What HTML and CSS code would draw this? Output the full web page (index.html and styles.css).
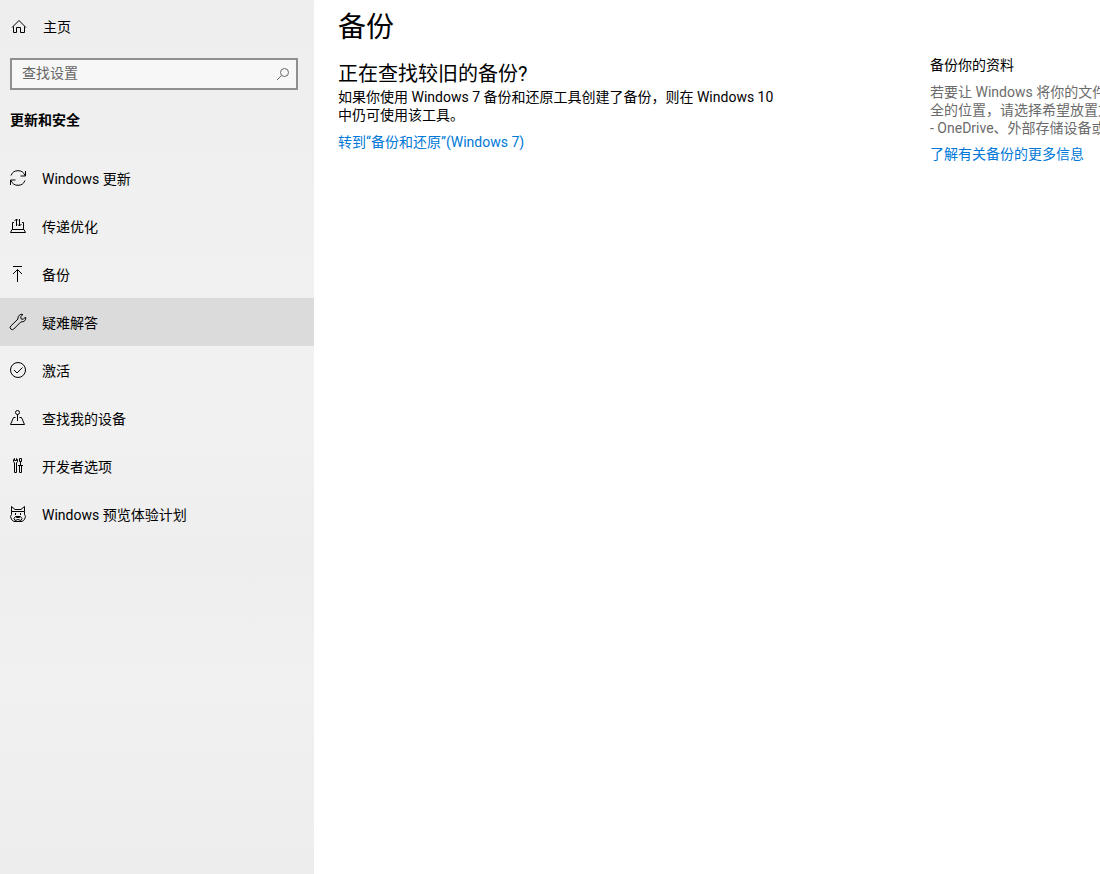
FILE: index.html
```html
<!DOCTYPE html>
<html lang="zh-CN">
<head>
<meta charset="utf-8">
<title>备份</title>
<link rel="stylesheet" href="styles.css">
</head>
<body>
<div class="settings">
  <div class="sidebar">
    <a class="home" href="#">
      <svg class="icon" viewBox="0 0 18 18"><path d="M2 9.500 9 2.500 16 9.500M3.500 8.500v6h3v-5h4v5h4v-6"/></svg>
      <span>主页</span>
    </a>
    <form class="search">
      <input class="search-input" type="text" placeholder="查找设置" aria-label="查找设置">
      <button class="search-button" type="button" aria-label="搜索">
        <svg class="search-icon" viewBox="0 0 14 14"><circle cx="8.500" cy="5.500" r="4"/><path d="M5.500 8.500 1 13"/></svg>
      </button>
    </form>
    <h2 class="category">更新和安全</h2>
    <nav class="nav">
      <a class="nav-item" href="#">
        <svg class="icon" viewBox="0 0 18 18"><path d="M2 6.500A7.500 7.500 0 0 1 16 6.500M16.500 2v5h-5M16 11.500A7.500 7.500 0 0 1 2 11.500M1.500 16v-5h5"/></svg>
        <span>Windows 更新</span>
      </a>
      <a class="nav-item" href="#">
        <svg class="icon" viewBox="0 0 18 18"><path d="M5 5.500H3.500v7M13 5.500h1.500v7M3 12.500h12l1.500 3h-15zM7.500 9V2M5.500 4l2-2 1.500 1.500M10.500 2v7M9 7.500l1.500 1.500 2-2"/></svg>
        <span>传递优化</span>
      </a>
      <a class="nav-item" href="#">
        <svg class="icon" viewBox="0 0 18 18"><path d="M4 1.500h9M8.500 17V4.500M4 9l4.500-4.500L13 9"/></svg>
        <span>备份</span>
      </a>
      <a class="nav-item nav-item-hover" href="#">
        <svg class="icon" viewBox="0 0 18 18"><path d="M9 6C8.500 3 11 .8 14 1.400L11.700 3.700l.4 2.200 2.200.4L16.600 4c.7 3.200-1.600 5.200-4.600 4.800L4.800 16a2.100 2.100 0 0 1-3-3z"/></svg>
        <span>疑难解答</span>
      </a>
      <a class="nav-item" href="#">
        <svg class="icon" viewBox="0 0 18 18"><circle cx="9" cy="9" r="7.500"/><path d="M5 9l3 3 5.500-5.500"/></svg>
        <span>激活</span>
      </a>
      <a class="nav-item" href="#">
        <svg class="icon" viewBox="0 0 18 18"><circle cx="8.500" cy="3.500" r="2"/><path d="M8.500 5.500v6.500M6.500 8.500h-2l-3 7h14l-3-7h-2"/></svg>
        <span>查找我的设备</span>
      </a>
      <a class="nav-item" href="#">
        <svg class="icon" viewBox="0 0 18 18"><path d="M5.500 1.500 4.500 2.500v2l1 1.500v9.500h2V6l1-1.500v-2l-1-1M5.500 1.500v2h2v-2M10.500 1.500h2v3h-2zM11.500 4.500v4M9 8.500h5M10.500 8.500v7h2v-7"/></svg>
        <span>开发者选项</span>
      </a>
      <a class="nav-item" href="#">
        <svg class="icon" viewBox="0 0 18 18"><path d="M2.500 6.500v-5l3.500 3h6l3.500-3v5M2.500 6.500h13M2.500 6.500v3l-1 2 1 3 2.500 2h8l2.500-2 1-3-1-2v-3M6 15.500l-1-2 1.500-2h5l1.500 2-1 2-3-1zM7.500 11.500h3v1h-3zM6.500 8v2M11.500 8v2"/></svg>
        <span>Windows 预览体验计划</span>
      </a>
    </nav>
  </div>
  <main class="content">
    <h1 class="page-title">备份</h1>
    <h2 class="section-title">正在查找较旧的备份?</h2>
    <p class="text">如果你使用 Windows 7 备份和还原工具创建了备份，则在 Windows 10 中仍可使用该工具。</p>
    <a class="link" href="#">转到“备份和还原”(Windows 7)</a>
  </main>
  <aside class="help">
    <h3 class="help-title">备份你的资料</h3>
    <p class="help-text">若要让 Windows 将你的文件<br>全的位置，请选择希望放置文<br>- OneDrive、外部存储设备或</p>
    <a class="link" href="#">了解有关备份的更多信息</a>
  </aside>
</div>
</body>
</html>
```
FILE: styles.css
```css
* { box-sizing: border-box; }

body {
  margin: 0;
  background: #fff;
  color: #000;
  font: 14px/18px Roboto, "Noto Sans CJK SC", sans-serif;
}

h1, h2, h3, p { margin: 0; font-weight: 400; }
a { color: inherit; text-decoration: none; }

.settings {
  display: grid;
  grid-template-columns: 314px 1fr 170px;
  min-height: 100vh;
}

.sidebar {
  background: linear-gradient(#eeeeee, #f1f1f1 35%, #f1f1f1 50%, #eeeeee 64%, #f1f1f1 78%, #ededed);
}

.icon {
  flex: none;
  width: 18px;
  height: 18px;
  fill: none;
  stroke: #000;
}

.home {
  display: flex;
  align-items: center;
  gap: 15px;
  height: 48px;
  padding: 6px 10px 0;
}

.search {
  display: flex;
  height: 32px;
  margin: 10px 16px 0 10px;
  border: 2px solid #8f8f8f;
  background: #f7f7f7;
}

.search-input {
  flex: 1;
  min-width: 0;
  padding: 0 10px 2px;
  border: 0;
  outline: 0;
  background: none;
  font: inherit;
}

.search-input::placeholder { color: #666; opacity: 1; }

.search-button {
  display: flex;
  align-items: center;
  padding: 0 6px;
  border: 0;
  background: none;
}

.search-icon {
  width: 14px;
  height: 14px;
  fill: none;
  stroke: #666;
}

.category {
  padding: 21px 10px 25px;
  font-size: 14px;
  font-weight: 700;
}

.nav-item {
  display: flex;
  align-items: center;
  gap: 15px;
  height: 48px;
  padding: 2px 9px 0;
}

.nav-item .icon { margin-bottom: 2px; }
.nav-item-hover { background: #dbdbdb; }

.content { padding: 8px 24px; }
.content .text { max-width: 440px; }

.page-title { font-size: 28px; line-height: 40px; }

.section-title {
  margin-top: 12px;
  font-size: 20px;
  line-height: 28px;
}

.link {
  display: inline-block;
  margin-top: 9px;
  color: #0078d7;
}

.help {
  padding-top: 56px;
  overflow: hidden;
  white-space: nowrap;
}

.help-title { font-size: 14px; }

.help-text {
  margin-top: 9px;
  color: #6b6b6b;
}

.help .link { margin-top: 8px; }
```
